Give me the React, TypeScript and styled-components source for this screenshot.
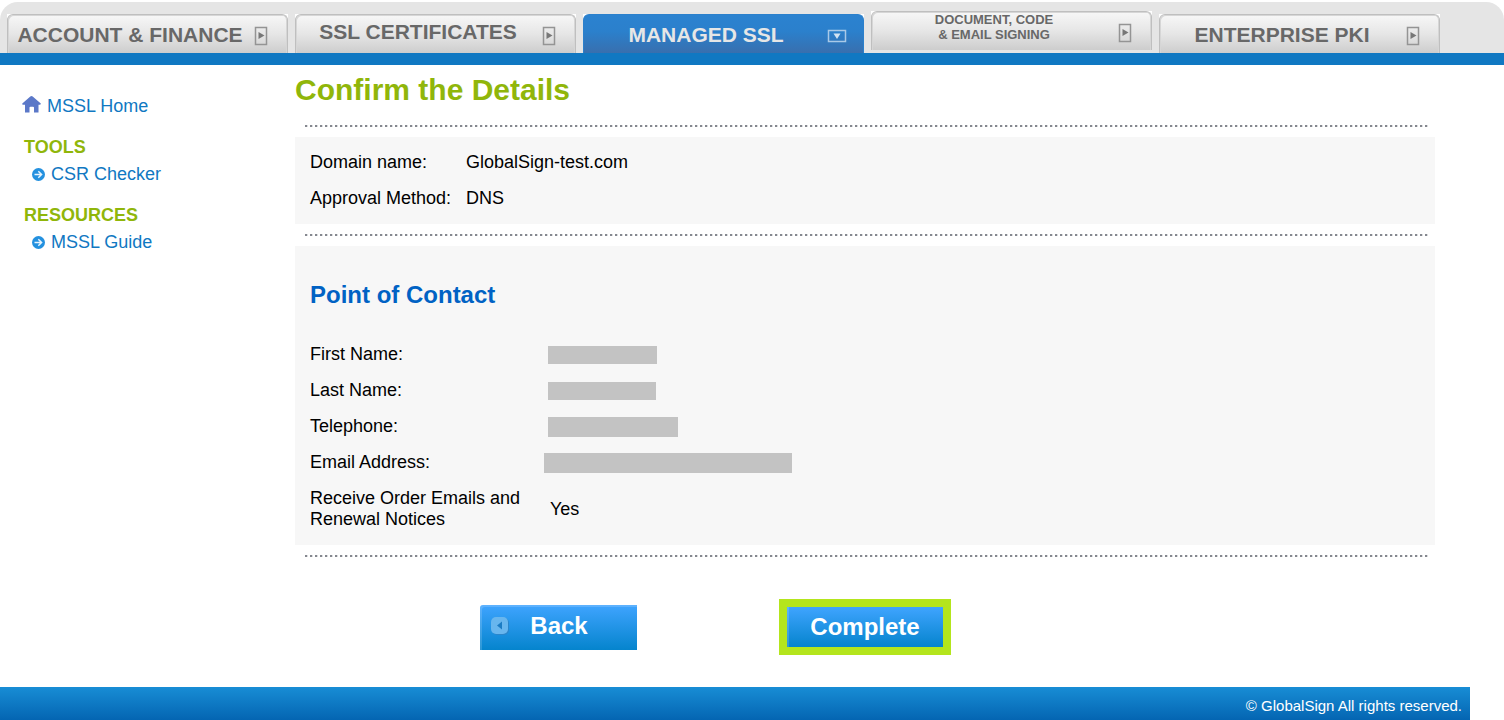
import React from "react";
import styled, { createGlobalStyle } from "styled-components";

const Global = createGlobalStyle`
  *, *::before, *::after { box-sizing: border-box; }
  body {
    margin: 0;
    background: #fff;
    color: #000;
    font: 18px/21px "Liberation Sans", Arial, sans-serif;
  }
`;

const Page = styled.div`
  display: flex;
  flex-direction: column;
  min-height: 100vh;
  padding-top: 2px;
`;

const TabBar = styled.nav`
  display: flex;
  align-items: flex-end;
  gap: 7px;
  height: 63px;
  padding: 0 7px;
  background: #e5e5e5;
  border-bottom: 12px solid #1078c2;
  border-radius: 18px 18px 0 0;
`;

const TabCell = styled.div<{ $raised?: boolean }>`
  flex: 0 1 281px;
  padding-bottom: ${(p) => (p.$raised ? 3 : 0)}px;
`;

const Corners = styled.div`
  background: linear-gradient(#fff 4px, transparent 4px);
`;

const Tab = styled.a<{ $active?: boolean; $compact?: boolean }>`
  display: grid;
  grid-template-columns: 1fr 34px;
  align-items: ${(p) => (p.$compact ? "start" : "center")};
  height: 39px;
  padding: 0 9px 0 8px;
  border: 1px solid ${(p) => (p.$active ? "#2b80cc" : "#bfbfbf")};
  border-bottom: 0;
  border-radius: 6px 6px 0 0;
  background: ${(p) =>
    p.$active
      ? "linear-gradient(#2b82d0 0%, #2b80cc 45%, #386fae 100%) border-box"
      : "linear-gradient(#f7f7f7, #e6e6e6 50%, #cdcdcd)"};
  box-shadow: ${(p) => (p.$active ? "none" : "inset 1px 1px #d6d6d6, inset -1px 0 #d6d6d6")};
  color: ${(p) => (p.$active ? "#e6e6e6" : "#686868")};
  font-size: ${(p) => (p.$compact ? 13 : 21)}px;
  line-height: ${(p) => (p.$compact ? 15 : 21)}px;
  font-weight: bold;
  text-align: center;
  text-decoration: none;
  white-space: nowrap;
`;

const TabLabel = styled.span<{ $lifted?: boolean }>`
  padding-bottom: ${(p) => (p.$lifted ? 6 : 0)}px;
`;

const TabIcon = styled.svg`
  display: block;
  align-self: center;
  justify-self: center;
  margin-top: 3px;
`;

const Columns = styled.div`
  display: grid;
  grid-template-columns: 295px minmax(0, 1fr);
  padding-right: 69px;
`;

const Sidebar = styled.nav`
  padding: 31px 16px 0 22px;
`;

const SideHeading = styled.h2`
  margin: 20px 0 6px;
  padding-left: 2px;
  font-size: 18px;
  line-height: 21px;
  color: #90b60a;
`;

const SideLink = styled.a<{ $nested?: boolean }>`
  display: flex;
  align-items: center;
  gap: 6px;
  padding-left: ${(p) => (p.$nested ? 10 : 0)}px;
  color: #1078c2;
  text-decoration: none;
`;

const Main = styled.main`
  min-width: 0;
`;

const Title = styled.h1`
  margin: 8px 0 18px;
  font-size: 30px;
  line-height: 34px;
  color: #90b60a;
`;

const Dots = styled.hr`
  height: 2px;
  margin: 0 7px 0 10px;
  border: 0;
  background: repeating-linear-gradient(90deg, #85888f 0 2px, #dcdde0 2px 3px, #fff 3px 5px);
`;

const Panel = styled.section`
  margin: 10px 0;
  padding: 8px 12px 7px;
  background: #f7f7f7;
`;

const PanelTitle = styled.h2`
  margin: 27px 3px 28px;
  font-size: 24px;
  line-height: 28px;
  color: #0062c4;
`;

const Details = styled.table<{ $wide?: boolean }>`
  border-collapse: collapse;

  th, td {
    padding: 7px 3px 8px;
    font-weight: normal;
    text-align: left;
  }
  th { width: ${(p) => (p.$wide ? 240 : 156)}px; }
`;

const Redacted = styled.div<{ $width: number; $height: number; $shift?: number }>`
  width: ${(p) => p.$width}px;
  height: ${(p) => p.$height}px;
  margin-left: ${(p) => p.$shift ?? -2}px;
  background: #c3c3c3;
`;

const Actions = styled.div`
  display: flex;
  align-items: center;
  gap: 142px;
  margin: 42px 0 32px 185px;
`;

const Button = styled.button`
  display: grid;
  grid-template-columns: 18px 1fr 18px;
  align-items: center;
  width: 157px;
  height: 45px;
  padding: 0 10px 2px 11px;
  border: 0;
  border-top-left-radius: 3px;
  background: linear-gradient(#3fa4ff, #0584cd);
  box-shadow: inset 2px 2px rgba(255, 255, 255, 0.16);
  color: #fff;
  font: bold 24px/28px "Liberation Sans", Arial, sans-serif;
`;

const Highlight = styled.div`
  padding: 8px;
  background: #b4e51d;
`;

const CompleteButton = styled(Button)`
  display: block;
  width: 156px;
  height: 40px;
  padding: 0;
  border-radius: 0;
  box-shadow: inset 2px 0 rgba(255, 255, 255, 0.16);
`;

const Footer = styled.footer`
  height: 33px;
  margin-right: 34px;
  padding: 8px 8px 0;
  background: linear-gradient(#188dd5, #0465b2);
  color: #fff;
  font-size: 15px;
  text-align: right;
`;

function ArrowBox({ down }: { down?: boolean }) {
  return down ? (
    <TabIcon width="20" height="14" viewBox="0 0 20 14" aria-hidden="true">
      <rect x="1.5" y="1.5" width="17" height="11" fill="none" stroke="#a9c9e8" strokeWidth="1.5" />
      <path d="M6.5 4.5h7L10 10z" fill="#d3e3f2" />
    </TabIcon>
  ) : (
    <TabIcon width="14" height="20" viewBox="0 0 14 20" aria-hidden="true">
      <rect x="1.5" y="1.5" width="11" height="17" fill="none" stroke="#949494" strokeWidth="1.5" />
      <path d="M4.500 6l6 3.500-6 3.500z" fill="#777" />
    </TabIcon>
  );
}

function HomeIcon() {
  return (
    <svg width="19" height="21" viewBox="0 0 19 21" aria-hidden="true">
      <path
        d="M8.300 0.600Q9.500-0.500 10.700 0.600L18.800 7.600Q19 9 17 8.800H16.500V16.500H12V11.500Q12 10.800 11 10.800H8.500Q7.500 10.800 7.500 11.500V16.500H3V8.800H2Q0 9 0.300 7.600Z"
        fill="#5b78c8"
      />
    </svg>
  );
}

function Bullet() {
  return (
    <svg width="13" height="13" viewBox="0 0 13 13" aria-hidden="true">
      <circle cx="6.500" cy="6.500" r="6.500" fill="#2491df" />
      <path d="M2.500 6.500h7M6.300 3.200L9.600 6.500 6.300 9.800" fill="none" stroke="#e8f4fd" strokeWidth="1.500" />
    </svg>
  );
}

type TabItem = { label: React.ReactNode; id: string; active?: boolean; compact?: boolean; lifted?: boolean };

const tabs: TabItem[] = [
  { id: "account", label: "ACCOUNT & FINANCE" },
  { id: "ssl", label: "SSL CERTIFICATES", lifted: true },
  { id: "mssl", label: "MANAGED SSL", active: true },
  { id: "signing", label: <>DOCUMENT, CODE<br />&amp; EMAIL SIGNING</>, compact: true },
  { id: "pki", label: "ENTERPRISE PKI" },
];

export default function App() {
  return (
    <>
      <Global />
      <Page>
        <TabBar>
          {tabs.map((t) => (
            <TabCell key={t.id} $raised={t.compact}>
              <Corners>
                <Tab href={`#${t.id}`} $active={t.active} $compact={t.compact}>
                  <TabLabel $lifted={t.lifted}>{t.label}</TabLabel>
                  <ArrowBox down={t.active} />
                </Tab>
              </Corners>
            </TabCell>
          ))}
        </TabBar>
        <Columns>
          <Sidebar>
            <SideLink href="#home"><HomeIcon />MSSL Home</SideLink>
            <SideHeading>TOOLS</SideHeading>
            <SideLink $nested href="#csr"><Bullet />CSR Checker</SideLink>
            <SideHeading>RESOURCES</SideHeading>
            <SideLink $nested href="#guide"><Bullet />MSSL Guide</SideLink>
          </Sidebar>
          <Main>
            <Title>Confirm the Details</Title>
            <Dots />
            <Panel>
              <Details>
                <tbody>
                  <tr><th scope="row">Domain name:</th><td>GlobalSign-test.com</td></tr>
                  <tr><th scope="row">Approval Method:</th><td>DNS</td></tr>
                </tbody>
              </Details>
            </Panel>
            <Dots />
            <Panel>
              <PanelTitle>Point of Contact</PanelTitle>
              <Details $wide>
                <tbody>
                  <tr><th scope="row">First Name:</th><td><Redacted $width={109} $height={18} /></td></tr>
                  <tr><th scope="row">Last Name:</th><td><Redacted $width={108} $height={18} /></td></tr>
                  <tr><th scope="row">Telephone:</th><td><Redacted $width={130} $height={20} /></td></tr>
                  <tr><th scope="row">Email Address:</th><td><Redacted $width={248} $height={20} $shift={-6} /></td></tr>
                  <tr><th scope="row">Receive Order Emails and Renewal Notices</th><td>Yes</td></tr>
                </tbody>
              </Details>
            </Panel>
            <Dots />
            <Actions>
              <Button type="button">
                <svg width="18" height="18" viewBox="0 0 18 18" aria-hidden="true">
                  <rect x="1" y="1" width="17" height="17" rx="5" fill="#2b86cb" />
                  <rect width="17" height="17" rx="5" fill="#68b6ee" />
                  <path d="M11 4.500v8L6 8.500z" fill="#1c7cc4" />
                </svg>
                Back
              </Button>
              <Highlight>
                <CompleteButton type="button">Complete</CompleteButton>
              </Highlight>
            </Actions>
          </Main>
        </Columns>
        <Footer>© GlobalSign All rights reserved.</Footer>
      </Page>
    </>
  );
}
